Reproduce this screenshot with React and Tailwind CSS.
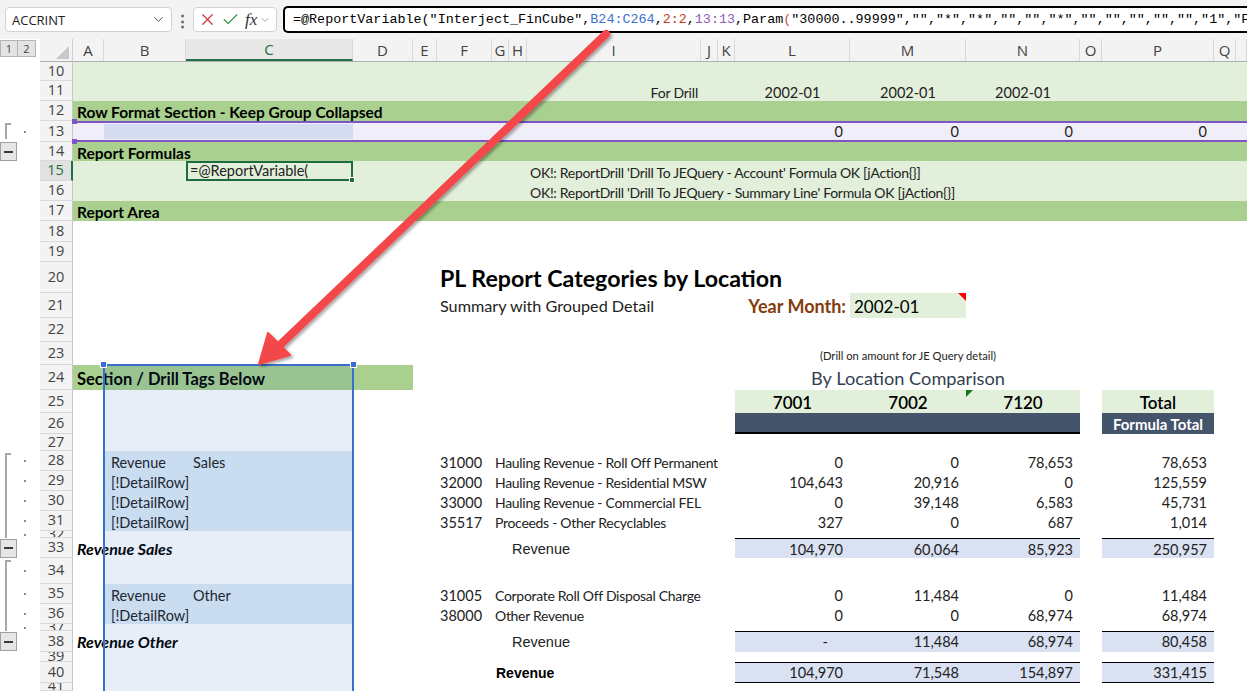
import React from "react";
import { X, Check, ChevronDown } from "lucide-react";

const GRID =
  "grid grid-rows-[minmax(0,1fr)] grid-cols-[31px_82px_167px_60px_24px_55px_17px_18px_174px_17px_17px_115px_116px_114px_22px_112px_22px_1fr]";

function Row({ h, n, out, g = "", active, children }) {
  return (
    <div className={`flex ${h}`}>
      <div className="w-[40px] shrink-0 flex h-full">{out}</div>
      <div
        className={`w-[33px] shrink-0 h-full flex items-center justify-center overflow-hidden border-b border-[#d9d9d9] font-['Open_Sans',sans-serif] text-[14.5px] leading-none ${
          active
            ? "bg-[#e1e1e1] text-[#1d6b3e] border-r-2 border-r-[#1e7145]"
            : "bg-[#f3f3f3] text-[#444] border-r border-r-[#c6c6c6]"
        }`}
      >
        {n}
      </div>
      <div className={`flex-1 h-full ${GRID} ${g}`}>{children}</div>
    </div>
  );
}

function C({ cls = "", children }) {
  return (
    <div className={`flex items-end whitespace-nowrap min-w-0 ${cls}`}>
      {children}
    </div>
  );
}

function OLine({ first, last, dot = true }) {
  return (
    <div className="flex h-full w-full">
      <div
        className={`ml-[5px] w-[6px] border-l-2 border-[#a8a8a8] ${
          first ? "border-t-2 mt-[2px]" : ""
        } ${last ? "mb-[3px]" : ""}`}
      />
      {dot && <div className="ml-[13px] self-center w-[2px] h-[2px] bg-[#8c8c8c]" />}
    </div>
  );
}

function OMinus() {
  return (
    <div className="flex h-full items-center">
      <div className="w-[17px] h-[19px] border border-[#a0a0a0] bg-[#e6e6e6] flex items-center justify-center">
        <div className="w-[9px] h-[2px] bg-[#3a3a3a]" />
      </div>
    </div>
  );
}

function Vals({ v, cls = "" }) {
  return (
    <>
      <C cls={`col-start-12 justify-end pr-[7px] ${cls}`}>{v[0]}</C>
      <C cls={`col-start-13 justify-end pr-[7px] ${cls}`}>{v[1]}</C>
      <C cls={`col-start-14 justify-end pr-[7px] ${cls}`}>{v[2]}</C>
      <C cls={`col-start-16 justify-end pr-[7px] ${cls}`}>{v[3]}</C>
    </>
  );
}

function Detail({ b, c, acct, name, v }) {
  return (
    <>
      {c ? (
        <>
          <C cls="col-start-2 pl-[7px] bg-[#ddebf7]">{b}</C>
          <C cls="col-start-3 pl-[7px] bg-[#ddebf7]">{c}</C>
        </>
      ) : (
        <C cls="col-start-2 col-span-2 pl-[7px] bg-[#ddebf7]">{b}</C>
      )}
      <C cls="col-start-6 pl-[3px]">{acct}</C>
      <C cls="col-start-7 col-span-5 pl-[3px] text-[14px] tracking-[-0.3px]">{name}</C>
      <Vals v={v} />
    </>
  );
}

function Totals({ v, dashFirst, border }) {
  const base = `bg-[#d9e1f2] justify-end pr-[7px] ${border}`;
  return (
    <>
      <C cls={`col-start-12 ${base} ${dashFirst ? "pr-[22px]" : ""}`}>{v[0]}</C>
      <C cls={`col-start-13 ${base}`}>{v[1]}</C>
      <C cls={`col-start-14 ${base}`}>{v[2]}</C>
      <C cls={`col-start-16 ${base}`}>{v[3]}</C>
    </>
  );
}

const LETTERS = ["A", "B", "C", "D", "E", "F", "G", "H", "I", "J", "K", "L", "M", "N", "O", "P", "Q", ""];

export default function App() {
  const formula =
    '"30000..99999","","*","*","","","*","","","","","","1","FA';
  return (
    <div className="relative w-[1247px] h-[691px] overflow-hidden bg-white font-[Lato,sans-serif] text-[14.5px] leading-[16px] text-[#222]">
      {/* Formula bar */}
      <div className="h-[39px] bg-[#f3f3f3] flex items-center">
        <div className="ml-[5px] w-[167px] h-[25px] bg-white border border-[#d2d2d2] rounded-[4px] flex items-center justify-between pl-[6px] pr-[5px]">
          <span className="font-['Open_Sans',sans-serif] text-[13px] text-[#222]">ACCRINT</span>
          <ChevronDown size={15} strokeWidth={1.6} className="text-[#555]" />
        </div>
        <div className="w-[21px] flex justify-center text-[#555] text-[15px] font-bold">⋮</div>
        <div className="w-[84px] h-[25px] bg-white border border-[#d2d2d2] rounded-[4px] flex items-center pl-[4px]">
          <X size={19} strokeWidth={1.5} className="text-[#d13438]" />
          <Check size={19} strokeWidth={1.5} className="ml-[4px] text-[#3d9a4c]" />
          <span className="ml-[5px] italic font-['Liberation_Serif',serif] text-[17px] text-[#333] leading-none">
            fx
          </span>
          <ChevronDown size={12} strokeWidth={1.5} className="ml-[2px] text-[#888]" />
        </div>
        <div className="ml-[6px] flex-1 h-[27px] bg-white border-2 border-r-0 border-black rounded-l-[5px] flex items-center pl-[8px] overflow-hidden whitespace-nowrap font-['Liberation_Mono',monospace] text-[13.4px] text-black">
          <span>=@ReportVariable("Interject_FinCube",</span>
          <span className="text-[#3a6fcf]">B24:C264</span>
          <span>,</span>
          <span className="text-[#c23b22]">2:2</span>
          <span>,</span>
          <span className="text-[#8e5bb5]">13:13</span>
          <span>,Param</span>
          <span className="text-[#c0504d]">(</span>
          <span>{formula}</span>
        </div>
      </div>

      {/* Column headers */}
      <div className="flex h-[23px]">
        <div className="w-[40px] shrink-0 flex items-start pt-[1px] bg-white">
          <div className="w-[18px] h-[17px] border border-[#b4b4b4] bg-[#e3e3e3] flex items-center justify-center text-[11px] text-[#444] font-['Open_Sans',sans-serif]">
            1
          </div>
          <div className="w-[18px] h-[17px] border border-l-0 border-[#b4b4b4] bg-[#e3e3e3] flex items-center justify-center text-[11px] text-[#444] font-['Open_Sans',sans-serif]">
            2
          </div>
        </div>
        <div className="w-[33px] shrink-0 bg-[#f3f3f3] border-b border-[#b0b0b0] border-r border-r-[#d0d0d0] flex items-end justify-end pr-[3px] pb-[2px]">
          <svg width="13" height="13" viewBox="0 0 13 13">
            <path d="M13 0 L13 13 L0 13 Z" fill="#c8c8c8" />
          </svg>
        </div>
        <div className={`flex-1 ${GRID} bg-[#f3f3f3] border-b border-[#b0b0b0]`}>
          {LETTERS.map((l, i) => (
            <div
              key={i}
              className={`flex items-center justify-center font-['Open_Sans',sans-serif] text-[15px] ${
                l === "C"
                  ? "text-[#1e6d40] border-b-2 border-b-[#1e7145] bg-[#e8e8e8] border-r border-r-[#d8d8d8]"
                  : "text-[#444] border-r border-[#d8d8d8]"
              }`}
            >
              {l}
            </div>
          ))}
        </div>
      </div>

      {/* Rows */}
      <Row h="h-[19px]" n="10" g="bg-[#e2efda]" />
      <Row h="h-[20px]" n="11" g="bg-[#e2efda]">
        <C cls="col-start-9 justify-end pr-[3px] text-[14px] tracking-[-0.2px]">For Drill</C>
        <C cls="col-start-12 justify-center">2002-01</C>
        <C cls="col-start-13 justify-center">2002-01</C>
        <C cls="col-start-14 justify-center">2002-01</C>
      </Row>
      <Row h="h-[20px]" n="12" g="bg-[#a9d08e]">
        <C cls="col-start-1 col-span-10 pl-[4px] pb-[1px] font-bold text-[15.5px] text-black">
          Row Format Section - Keep Group Collapsed
        </C>
      </Row>
      <Row
        h="h-[21px]"
        n="13"
        out={<OLine first last />}
        g="bg-[#f0eef8] border-y-2 border-[#7d55c4]"
      >
        <C cls="col-start-2 col-span-2 bg-[#d5dcf0] my-[1px]"></C>
        <Vals v={["0", "0", "0", "0"]} />
      </Row>
      <Row h="h-[19px]" n="14" out={<OMinus />} g="bg-[#a9d08e]">
        <C cls="col-start-1 col-span-10 pl-[4px] font-bold text-[15.5px] text-black">
          Report Formulas
        </C>
      </Row>
      <Row h="h-[20px]" n="15" active g="bg-[#e2efda]">
        <div className="col-start-3 relative border-2 border-[#1e6b41] flex items-center pl-[2px] whitespace-nowrap">
          =@ReportVariable(
          <div className="absolute -right-[4px] -bottom-[4px] w-[6px] h-[6px] bg-[#1e6b41] border border-white" />
        </div>
        <C cls="col-start-9 pl-[3px] text-[14px] tracking-[-0.3px]">
          OK!: ReportDrill 'Drill To JEQuery - Account' Formula OK [jAction{"{}"}]
        </C>
      </Row>
      <Row h="h-[20px]" n="16" g="bg-[#e2efda]">
        <C cls="col-start-9 pl-[3px] text-[14px] tracking-[-0.3px]">
          OK!: ReportDrill 'Drill To JEQuery - Summary Line' Formula OK [jAction{"{}"}]
        </C>
      </Row>
      <Row h="h-[20px]" n="17" g="bg-[#a9d08e]">
        <C cls="col-start-1 col-span-10 pl-[4px] pb-[1px] font-bold text-[15.5px] text-black">
          Report Area
        </C>
      </Row>
      <Row h="h-[21px]" n="18" />
      <Row h="h-[20px]" n="19" />
      <Row h="h-[31px]" n="20">
        <C cls="col-start-6 pl-[3px] text-[23.2px] leading-[30px] font-bold text-black">
          PL Report Categories by Location
        </C>
      </Row>
      <Row h="h-[25px]" n="21">
        <C cls="col-start-6 pl-[3px] pb-[4px] text-[16.2px]">Summary with Grouped Detail</C>
        <C cls="col-start-12 justify-end pr-[4px] pb-[4px] text-[18px] font-bold text-[#843c0c]">
          Year Month:
        </C>
        <div className="col-start-13 relative bg-[#e2efda] flex items-end pb-[3px] pl-[4px] text-[17px] text-black">
          2002-01
          <div className="absolute top-0 right-0 w-0 h-0 border-l-[8px] border-l-transparent border-t-[8px] border-t-[#ff0000]" />
        </div>
      </Row>
      <Row h="h-[24px]" n="22" />
      <Row h="h-[23px]" n="23">
        <C cls="col-start-13 justify-center pb-[1px] text-[11.2px]">
          (Drill on amount for JE Query detail)
        </C>
      </Row>
      <Row h="h-[25px]" n="24">
        <C cls="col-start-1 col-span-4 bg-[#a9d08e] pl-[4px] pb-[3px] text-[16.5px] font-bold text-black">
          Section / Drill Tags Below
        </C>
        <C cls="col-start-13 justify-center pb-[4px] text-[18.2px] text-[#333f4f]">
          By Location Comparison
        </C>
      </Row>
      <Row h="h-[23px]" n="25">
        <C cls="col-start-12 justify-center pb-[2px] bg-[#e2efda] text-[17px] font-semibold text-black">
          7001
        </C>
        <C cls="col-start-13 justify-center pb-[2px] bg-[#e2efda] text-[17px] font-semibold text-black">
          7002
        </C>
        <div className="col-start-14 relative flex items-end justify-center pb-[2px] bg-[#e2efda] text-[17px] font-semibold text-black">
          7120
          <div className="absolute top-0 left-0 w-0 h-0 border-r-[7px] border-r-transparent border-t-[7px] border-t-[#0f7b0f]" />
        </div>
        <C cls="col-start-16 justify-center pb-[2px] bg-[#e2efda] text-[17px] font-semibold text-black">
          Total
        </C>
      </Row>
      <Row h="h-[21px]" n="26">
        <div className="col-start-12 col-span-3 bg-[#44546a] border-b-2 border-black" />
        <div className="col-start-16 bg-[#44546a] flex items-center justify-center text-white font-bold text-[15px] whitespace-nowrap">
          Formula Total
        </div>
      </Row>
      <Row h="h-[17px]" n="27" />
      <Row h="h-[20px]" n="28" out={<OLine first />}>
        <Detail
          b="Revenue"
          c="Sales"
          acct="31000"
          name="Hauling Revenue - Roll Off Permanent"
          v={["0", "0", "78,653", "78,653"]}
        />
      </Row>
      <Row h="h-[20px]" n="29" out={<OLine />}>
        <Detail
          b="[!DetailRow]"
          acct="32000"
          name="Hauling Revenue - Residential MSW"
          v={["104,643", "20,916", "0", "125,559"]}
        />
      </Row>
      <Row h="h-[20px]" n="30" out={<OLine />}>
        <Detail
          b="[!DetailRow]"
          acct="33000"
          name="Hauling Revenue - Commercial FEL"
          v={["0", "39,148", "6,583", "45,731"]}
        />
      </Row>
      <Row h="h-[20px]" n="31" out={<OLine />}>
        <Detail
          b="[!DetailRow]"
          acct="35517"
          name="Proceeds - Other Recyclables"
          v={["327", "0", "687", "1,014"]}
        />
      </Row>
      <Row h="h-[7px]" n="32" out={<OLine />} />
      <Row h="h-[20px]" n="33" out={<OMinus />}>
        <C cls="col-start-1 col-span-4 pl-[4px] pb-[1px] font-bold italic text-[16px] text-black">
          Revenue Sales
        </C>
        <C cls="col-start-7 col-span-5 pl-[20px] pb-[1px] font-['Liberation_Sans',sans-serif] text-[14.5px]">
          Revenue
        </C>
        <Totals v={["104,970", "60,064", "85,923", "250,957"]} border="border-t border-black" />
      </Row>
      <Row h="h-[26px]" n="34" out={<OLine first />} />
      <Row h="h-[20px]" n="35" out={<OLine />}>
        <Detail
          b="Revenue"
          c="Other"
          acct="31005"
          name="Corporate Roll Off Disposal Charge"
          v={["0", "11,484", "0", "11,484"]}
        />
      </Row>
      <Row h="h-[20px]" n="36" out={<OLine />}>
        <Detail
          b="[!DetailRow]"
          acct="38000"
          name="Other Revenue"
          v={["0", "0", "68,974", "68,974"]}
        />
      </Row>
      <Row h="h-[7px]" n="37" out={<OLine />} />
      <Row h="h-[21px]" n="38" out={<OMinus />}>
        <C cls="col-start-1 col-span-4 pl-[4px] pb-[2px] font-bold italic text-[16px] text-black">
          Revenue Other
        </C>
        <C cls="col-start-7 col-span-5 pl-[20px] pb-[2px] font-['Liberation_Sans',sans-serif] text-[14.5px]">
          Revenue
        </C>
        <Totals dashFirst v={["-", "11,484", "68,974", "80,458"]} border="border-t border-black pb-[2px]" />
      </Row>
      <Row h="h-[10px]" n="39" />
      <Row h="h-[21px]" n="40">
        <C cls="col-start-7 col-span-5 pl-[4px] pb-[2px] font-['Liberation_Sans',sans-serif] text-[14px] font-bold text-black">
          Revenue
        </C>
        <Totals v={["104,970", "71,548", "154,897", "331,415"]} border="border-y border-black pb-[1px]" />
      </Row>
      <Row h="h-[8px]" n="41" />

      {/* Reference highlight B24:C264 */}
      <div className="absolute left-[103px] top-[364px] w-[251px] h-[340px] border-2 border-[#3b6fcc] bg-[#1955b9]/10">
        <div className="absolute -left-[5px] -top-[5px] w-[7px] h-[7px] bg-[#3b6fcc] border border-white" />
        <div className="absolute -right-[5px] -top-[5px] w-[7px] h-[7px] bg-[#3b6fcc] border border-white" />
      </div>
      {/* Row 13 reference handles */}
      <div className="absolute left-[72px] top-[119px] w-[5px] h-[5px] bg-[#7d55c4]" />
      <div className="absolute left-[72px] top-[139px] w-[5px] h-[5px] bg-[#7d55c4]" />

      {/* Red annotation arrow */}
      <svg
        className="absolute inset-0 pointer-events-none"
        width="1247"
        height="691"
        viewBox="0 0 1247 691"
      >
        <defs>
          <filter id="sh" x="-10%" y="-10%" width="120%" height="120%">
            <feDropShadow dx="2" dy="2" stdDeviation="1.5" floodColor="#000" floodOpacity="0.35" />
          </filter>
        </defs>
        <g filter="url(#sh)">
          <line x1="606" y1="34" x2="281" y2="344" stroke="#f3474a" strokeWidth="8" strokeLinecap="round" />
          <path d="M259 364 L268 333 L279 344 L290 355 Z" fill="#f3474a" stroke="#f3474a" strokeWidth="2" strokeLinejoin="round" />
        </g>
      </svg>
    </div>
  );
}
